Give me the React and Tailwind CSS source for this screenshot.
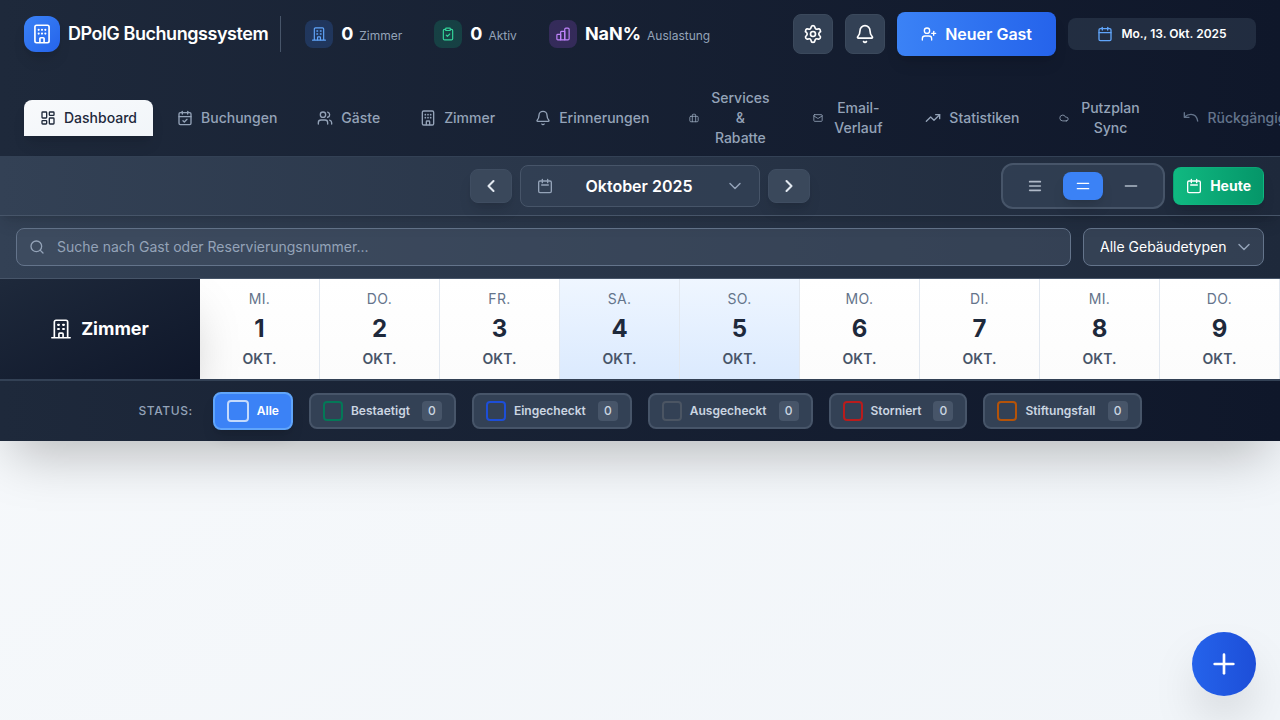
import React from 'react';
import {
  Bell,
  Calendar,
  CalendarCheck,
  ChevronDown,
  ChevronLeft,
  ChevronRight,
  ClipboardCheck,
  Cloud,
  LayoutDashboard,
  Mail,
  Plus,
  Search,
  Settings,
  TrendingUp,
  UserPlus,
  Users,
} from 'lucide-react';

function Icon({ className, strokeWidth = 2, children }) {
  return (
    <svg
      viewBox="0 0 24 24"
      fill="none"
      stroke="currentColor"
      strokeWidth={strokeWidth}
      strokeLinecap="round"
      strokeLinejoin="round"
      className={className}
      aria-hidden="true"
    >
      {children}
    </svg>
  );
}

function BuildingIcon({ className, strokeWidth = 2 }) {
  return (
    <Icon className={className} strokeWidth={strokeWidth}>
      <rect x="3.5" y="1.5" width="17" height="21" rx="2" />
      <path d="M9.5 22v-4.500a1 1 0 0 1 1-1h3a1 1 0 0 1 1 1V22" />
      <path d="M8 7h.01M12 7h.01M16 7h.01M8 11.500h.01M12 11.500h.01M16 11.500h.01" strokeWidth="2.6" />
    </Icon>
  );
}

function HouseBlockIcon({ className, strokeWidth = 2 }) {
  return (
    <Icon className={className} strokeWidth={strokeWidth}>
      <path d="M1 22.500h22M4 22.500V3.500a2 2 0 0 1 2-2h12a2 2 0 0 1 2 2v19" />
      <path d="M9.500 22v-4a1 1 0 0 1 1-1h3a1 1 0 0 1 1 1v4" />
      <path d="M8.500 7h1M14.500 7h1M8.500 12h1M14.500 12h1" strokeWidth="2.6" />
    </Icon>
  );
}

function BarsIcon({ className }) {
  return (
    <Icon className={className}>
      <path d="M1.500 14A1.500 1.500 0 0 1 3 12.500h5V22H3a1.500 1.500 0 0 1-1.500-1.500Z" />
      <path d="M8 22V9a1.500 1.500 0 0 1 1.500-1.500H15V22Z" />
      <path d="M15 22V4a2 2 0 0 1 2-2h3.500A2 2 0 0 1 22.500 4v16a2 2 0 0 1-2 2Z" />
    </Icon>
  );
}

function DayIcon({ className }) {
  return (
    <Icon className={className}>
      <rect x="2.500" y="4.500" width="19" height="17.500" rx="2" />
      <path d="M8 2v5M16 2v5M7 10.500h10" />
    </Icon>
  );
}

function GiftIcon({ className }) {
  return (
    <Icon className={className}>
      <rect x="2" y="8" width="20" height="13" rx="2.500" />
      <path d="M8 21V5a2 2 0 0 1 2-2h4a2 2 0 0 1 2 2v16" />
    </Icon>
  );
}

function UndoIcon({ className }) {
  return (
    <Icon className={className}>
      <path d="M2 4v7h7" />
      <path d="M2.500 10.500C5 8 8.500 6.500 12 6.500c5 0 9 4 10 10" />
    </Icon>
  );
}

const stats = [
  { value: '0', label: 'Zimmer', icon: HouseBlockIcon, tile: 'bg-[#3b82f6]/20 text-[#60a5fa]' },
  { value: '0', label: 'Aktiv', icon: ClipboardCheck, tile: 'bg-[#10b981]/20 text-[#34d399]' },
  { value: 'NaN%', label: 'Auslastung', icon: BarsIcon, tile: 'bg-[#a855f7]/20 text-[#c084fc]' },
];

const tabs = [
  { label: 'Dashboard', icon: LayoutDashboard, active: true },
  { label: 'Buchungen', icon: CalendarCheck },
  { label: 'Gäste', icon: Users },
  { label: 'Zimmer', icon: BuildingIcon },
  { label: 'Erinnerungen', icon: Bell },
  { label: 'Services\n&\nRabatte', icon: GiftIcon, iconSize: 'size-2.5', textWidth: 'w-[66px]' },
  { label: 'Email-\nVerlauf', icon: Mail, iconSize: 'size-2.5', textWidth: 'w-[54px]' },
  { label: 'Statistiken', icon: TrendingUp },
  { label: 'Putzplan\nSync', icon: Cloud, iconSize: 'size-2.5', textWidth: 'w-[66px]' },
  { label: 'Rückgängig', icon: UndoIcon, disabled: true },
];

const days = [
  ['Mi.', 1],
  ['Do.', 2],
  ['Fr.', 3],
  ['Sa.', 4],
  ['So.', 5],
  ['Mo.', 6],
  ['Di.', 7],
  ['Mi.', 8],
  ['Do.', 9],
];

const statuses = [
  { label: 'Bestaetigt', box: 'border-[#047857]' },
  { label: 'Eingecheckt', box: 'border-[#1d4ed8]' },
  { label: 'Ausgecheckt', box: 'border-[#4b5563]' },
  { label: 'Storniert', box: 'border-[#b91c1c]' },
  { label: 'Stiftungsfall', box: 'border-[#b45309]' },
];

function Header() {
  return (
    <header className="bg-linear-to-r from-[#1e293b] to-[#0f172a]">
      <div className="flex items-center justify-between px-6 py-3">
        <div className="flex items-center">
          <div className="flex size-9 items-center justify-center rounded-xl bg-linear-to-br from-[#3b82f6] to-[#2563eb] text-white shadow-lg">
            <BuildingIcon className="size-5" />
          </div>
          <h1 className="ml-2 text-lg font-semibold tracking-tight whitespace-nowrap text-white">DPolG Buchungssystem</h1>
          <div className="ml-3 flex h-9 items-center gap-8 border-l border-[#475569] pl-6">
            {stats.map(({ value, label, icon: StatIcon, tile }) => (
              <div key={label} className="flex items-center gap-2">
                <div className={`flex size-7 items-center justify-center rounded-lg ${tile}`}>
                  <StatIcon className="size-3.5" />
                </div>
                <p className="flex items-baseline gap-1.5">
                  <span className="text-lg font-bold text-white">{value}</span>
                  <span className="text-xs text-[#94a3b8]">{label}</span>
                </p>
              </div>
            ))}
          </div>
        </div>
        <div className="flex items-center gap-3">
          <button type="button" aria-label="Einstellungen" className="flex size-10 items-center justify-center rounded-lg border border-[#3b495c] bg-[#334155] text-white">
            <Settings className="size-5" />
          </button>
          <button type="button" aria-label="Benachrichtigungen" className="flex size-10 items-center justify-center rounded-lg border border-[#3b495c] bg-[#334155] text-white">
            <Bell className="size-5" />
          </button>
          <button type="button" className="flex h-11 items-center gap-2 rounded-lg bg-linear-to-r from-[#3b82f6] to-[#2563eb] px-6 font-semibold whitespace-nowrap text-white shadow-lg">
            <UserPlus className="size-4" />
            Neuer Gast
          </button>
          <div className="flex h-8 w-47 items-center justify-center gap-2 rounded-lg bg-[#334155]/50 text-xs font-semibold whitespace-nowrap text-white">
            <Calendar className="size-4 text-[#60a5fa]" />
            Mo., 13. Okt. 2025
          </div>
        </div>
      </div>
      <nav className="mt-3 flex items-center gap-2 overflow-hidden px-6">
        {tabs.map(({ label, icon: TabIcon, active, disabled, iconSize = 'size-4', textWidth = '' }) => (
          <button
            key={label}
            type="button"
            disabled={disabled}
            className={`flex shrink-0 items-center gap-2 px-4 py-2 text-sm leading-5 font-medium ${
              active
                ? 'rounded-t-lg bg-linear-to-br from-[#f8fafc] to-[#f1f5f9] text-[#1e293b] shadow-lg'
                : disabled
                  ? 'text-[#64748b]'
                  : 'text-[#94a3b8]'
            }`}
          >
            <TabIcon className={`shrink-0 ${iconSize}`} />
            <span className={`whitespace-pre-line ${textWidth}`}>{label}</span>
          </button>
        ))}
      </nav>
    </header>
  );
}

function MonthBar() {
  const arrow =
    'flex h-[34px] w-[42px] items-center justify-center rounded-lg border border-[#3f4d61] bg-[#3a485b] text-[#e2e8f0] shadow-lg';
  return (
    <div className="relative z-10 flex items-center border-t border-b border-t-[#334155] border-b-[#475569] bg-linear-to-r from-[#334155] to-[#1e293b] px-4 py-1.5 shadow-lg">
      <div className="flex-1" />
      <div className="flex items-center gap-2">
        <button type="button" aria-label="Vorheriger Monat" className={arrow}>
          <ChevronLeft className="size-5" strokeWidth={2.5} />
        </button>
        <button type="button" className="flex h-[42px] w-60 items-center justify-between rounded-lg border border-[#475569] bg-[#334155]/80 pr-3.5 pl-4 font-semibold text-white">
          <DayIcon className="size-4 text-[#94a3b8]" />
          Oktober 2025
          <ChevronDown className="size-5 text-[#94a3b8]" strokeWidth={1.75} />
        </button>
        <button type="button" aria-label="Nächster Monat" className={arrow}>
          <ChevronRight className="size-5" strokeWidth={2.5} />
        </button>
      </div>
      <div className="flex flex-1 items-center justify-end gap-2">
        <div className="flex h-[46px] items-center gap-2 rounded-xl border-2 border-[#475569] bg-[#334155]/80 px-3 text-[#b0bac8]">
          <button type="button" aria-label="Komfortabel" className="flex h-7 w-10 items-center justify-center rounded-lg">
            <Icon className="size-4" strokeWidth={2.5}>
              <path d="M4 5.500h16M4 12h16M4 18.500h16" />
            </Icon>
          </button>
          <button type="button" aria-label="Normal" className="flex h-7 w-10 items-center justify-center rounded-lg bg-[#3b82f6] text-white shadow-lg">
            <Icon className="size-4">
              <path d="M3.500 8h17M3.500 16h17" />
            </Icon>
          </button>
          <button type="button" aria-label="Kompakt" className="flex h-7 w-10 items-center justify-center rounded-lg">
            <Icon className="size-4">
              <path d="M3.500 12h17" />
            </Icon>
          </button>
        </div>
        <button type="button" className="flex h-[38px] items-center gap-2 rounded-lg border border-[#10b981]/40 bg-linear-to-r from-[#10b981] to-[#059669] px-3 text-sm font-bold text-white shadow-lg">
          <DayIcon className="size-4" />
          Heute
        </button>
      </div>
    </div>
  );
}

function FilterBar() {
  return (
    <div className="flex gap-3 border-b border-[#475569] bg-linear-to-r from-[#334155] to-[#1e293b] px-4 py-3">
      <label className="flex h-[38px] flex-1 items-center gap-3 rounded-lg border border-[#64748b] bg-[#475569]/50 px-3 text-[#94a3b8]">
        <Search className="size-4" />
        <input
          type="text"
          aria-label="Suche"
          placeholder="Suche nach Gast oder Reservierungsnummer..."
          className="min-w-0 flex-1 text-sm text-white outline-none placeholder:text-[#94a3b8]"
        />
      </label>
      <div className="grid items-center">
        <select
          aria-label="Gebäudetyp"
          className="col-start-1 row-start-1 h-[38px] w-[181px] appearance-none rounded-lg border border-[#64748b] bg-[#475569]/50 pr-8 pl-4 text-sm text-white"
        >
          <option>Alle Gebäudetypen</option>
        </select>
        <ChevronDown className="pointer-events-none col-start-1 row-start-1 mr-2.5 size-5 justify-self-end text-[#94a3b8]" strokeWidth={1.75} />
      </div>
    </div>
  );
}

function Timeline() {
  return (
    <div className="flex overflow-hidden border-b-2 border-[#334155] bg-white">
      <div className="z-10 flex w-50 shrink-0 items-center justify-center gap-2.5 bg-linear-to-br from-[#1e293b] to-[#0f172a] text-lg font-bold text-white shadow-2xl">
        <HouseBlockIcon className="size-5" />
        Zimmer
      </div>
      {days.map(([name, number]) => {
        const weekend = name === 'Sa.' || name === 'So.';
        return (
          <div
            key={number}
            className={`flex h-25 min-w-30 flex-1 flex-col items-center border-r border-[#e2e8f0] bg-linear-to-b pt-2.5 uppercase ${
              weekend ? 'from-[#eff6ff] to-[#dbeafe]' : 'from-white to-[#fcfcfc]'
            }`}
          >
            <span className="text-sm tracking-wide text-[#64748b]">{name}</span>
            <span className="my-1 text-2xl font-bold text-[#1e293b]">{number}</span>
            <span className="text-sm font-semibold text-[#475569]">Okt.</span>
          </div>
        );
      })}
    </div>
  );
}

function StatusBar() {
  return (
    <div className="flex h-15 items-center justify-center gap-4 bg-linear-to-r from-[#1e293b] to-[#0f172a] text-xs font-semibold">
      <span className="mr-1 font-medium tracking-wider text-[#94a3b8]">STATUS:</span>
      <button type="button" className="flex h-[38px] items-center gap-2 rounded-lg border-2 border-[#60a5fa] bg-[#3b82f6] px-3 text-white shadow-lg">
        <span className="size-[22px] rounded border-2 border-white/70" />
        Alle
      </button>
      {statuses.map(({ label, box }) => (
        <button key={label} type="button" className="flex h-9 items-center gap-2 rounded-lg border-2 border-[#475569] bg-[#334155] px-3 text-[#cbd5e1]">
          <span className={`size-5 rounded border-2 ${box}`} />
          {label}
          <span className="ml-1 flex size-5 items-center justify-center rounded bg-[#475569] font-medium">0</span>
        </button>
      ))}
    </div>
  );
}

export default function App() {
  return (
    <div className="min-h-screen overflow-x-hidden bg-linear-to-br from-[#f8fafc] to-[#f1f5f9] font-['Inter',sans-serif]">
      <div className="shadow-2xl">
        <Header />
        <MonthBar />
        <FilterBar />
        <Timeline />
        <StatusBar />
      </div>
      <button
        type="button"
        aria-label="Neue Buchung"
        className="fixed right-6 bottom-6 flex size-16 items-center justify-center rounded-full bg-linear-to-r from-[#2563eb] to-[#1d4ed8] text-white shadow-2xl"
      >
        <Plus className="size-8" />
      </button>
    </div>
  );
}
